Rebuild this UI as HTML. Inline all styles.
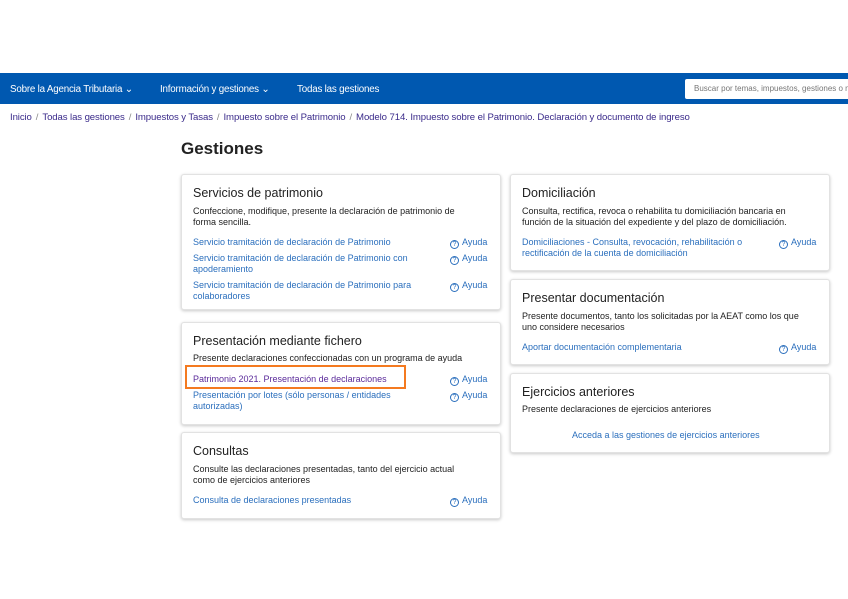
<!DOCTYPE html>
<html><head><meta charset="utf-8"><style>
*{margin:0;padding:0;box-sizing:border-box}
body{width:848px;height:599px;background:#fff;position:relative;overflow:hidden;font-family:"Liberation Sans",sans-serif;color:#222}
.a{position:absolute;white-space:nowrap}
.nav{position:absolute;left:0;top:73px;width:848px;height:31px;background:#0058b0}
.nav span{position:absolute;top:11px;color:#fff;font-size:9.8px;letter-spacing:-0.2px}
.search{position:absolute;left:685px;top:6px;width:170px;height:20px;background:#fff;border-radius:2px;font-size:8px;color:#777;padding:5px 0 0 9px;white-space:nowrap;overflow:hidden}
.bc{position:absolute;left:10px;top:112px;font-size:9.6px;color:#3a2a8a;white-space:nowrap;letter-spacing:-0.1px}
.bc i{font-style:normal;color:#888;margin:0 4px}
.card{position:absolute;background:#fff;border:1px solid #e2e2e2;border-radius:3px;box-shadow:0 1px 3px rgba(0,0,0,.22)}
.t{font-size:12.5px;color:#222}
.d{font-size:9px;line-height:11px;color:#222}
.l{font-size:9px;line-height:11px;color:#2b6fbd}
.h{font-size:9px;line-height:11px;color:#2b6fbd}
.h b{display:inline-block;width:9px;height:9px;border:1px solid #2b6fbd;border-radius:50%;font-size:7px;line-height:7px;text-align:center;font-weight:normal;margin-right:3px;vertical-align:-1px}
</style></head><body>
<div class="nav">
<span style="left:10px">Sobre la Agencia Tributaria ⌄</span>
<span style="left:160px">Información y gestiones ⌄</span>
<span style="left:297px">Todas las gestiones</span>
<div class="search">Buscar por temas, impuestos, gestiones o n</div>
</div>
<div class="bc">Inicio<i>/</i>Todas las gestiones<i>/</i>Impuestos y Tasas<i>/</i>Impuesto sobre el Patrimonio<i>/</i>Modelo 714. Impuesto sobre el Patrimonio. Declaración y documento de ingreso</div>
<div class="a" style="left:181px;top:139px;font-size:17px;font-weight:bold;color:#222">Gestiones</div>

<div class="card" style="left:181px;top:174px;width:320px;height:136px"></div>
<div class="a t" style="left:193px;top:186px">Servicios de patrimonio</div>
<div class="a d" style="left:193px;top:206px">Confeccione, modifique, presente la declaración de patrimonio de<br>forma sencilla.</div>
<div class="a l" style="left:193px;top:237px">Servicio tramitación de declaración de Patrimonio</div>
<div class="a l" style="left:193px;top:253px">Servicio tramitación de declaración de Patrimonio con<br>apoderamiento</div>
<div class="a l" style="left:193px;top:280px">Servicio tramitación de declaración de Patrimonio para<br>colaboradores</div>
<div class="a h" style="left:450px;top:237px"><b>?</b>Ayuda</div>
<div class="a h" style="left:450px;top:253px"><b>?</b>Ayuda</div>
<div class="a h" style="left:450px;top:280px"><b>?</b>Ayuda</div>

<div class="card" style="left:181px;top:322px;width:320px;height:103px"></div>
<div class="a t" style="left:193px;top:334px">Presentación mediante fichero</div>
<div class="a d" style="left:193px;top:353px">Presente declaraciones confeccionadas con un programa de ayuda</div>
<div class="a l" style="left:193px;top:374px;color:#5a2a9a">Patrimonio 2021. Presentación de declaraciones</div>
<div class="a" style="left:185px;top:365px;width:221px;height:24px;border:2px solid #f47a20"></div>
<div class="a l" style="left:193px;top:390px">Presentación por lotes (sólo personas / entidades<br>autorizadas)</div>
<div class="a h" style="left:450px;top:374px"><b>?</b>Ayuda</div>
<div class="a h" style="left:450px;top:390px"><b>?</b>Ayuda</div>

<div class="card" style="left:181px;top:432px;width:320px;height:87px"></div>
<div class="a t" style="left:193px;top:444px">Consultas</div>
<div class="a d" style="left:193px;top:464px">Consulte las declaraciones presentadas, tanto del ejercicio actual<br>como de ejercicios anteriores</div>
<div class="a l" style="left:193px;top:495px">Consulta de declaraciones presentadas</div>
<div class="a h" style="left:450px;top:495px"><b>?</b>Ayuda</div>

<div class="card" style="left:510px;top:174px;width:320px;height:97px"></div>
<div class="a t" style="left:522px;top:186px">Domiciliación</div>
<div class="a d" style="left:522px;top:206px">Consulta, rectifica, revoca o rehabilita tu domiciliación bancaria en<br>función de la situación del expediente y del plazo de domiciliación.</div>
<div class="a l" style="left:522px;top:237px">Domiciliaciones - Consulta, revocación, rehabilitación o<br>rectificación de la cuenta de domiciliación</div>
<div class="a h" style="left:779px;top:237px"><b>?</b>Ayuda</div>

<div class="card" style="left:510px;top:279px;width:320px;height:86px"></div>
<div class="a t" style="left:522px;top:291px">Presentar documentación</div>
<div class="a d" style="left:522px;top:311px">Presente documentos, tanto los solicitadas por la AEAT como los que<br>uno considere necesarios</div>
<div class="a l" style="left:522px;top:342px">Aportar documentación complementaria</div>
<div class="a h" style="left:779px;top:342px"><b>?</b>Ayuda</div>

<div class="card" style="left:510px;top:373px;width:320px;height:80px"></div>
<div class="a t" style="left:522px;top:385px">Ejercicios anteriores</div>
<div class="a d" style="left:522px;top:404px">Presente declaraciones de ejercicios anteriores</div>
<div class="a l" style="left:572px;top:430px">Acceda a las gestiones de ejercicios anteriores</div>
</body></html>
